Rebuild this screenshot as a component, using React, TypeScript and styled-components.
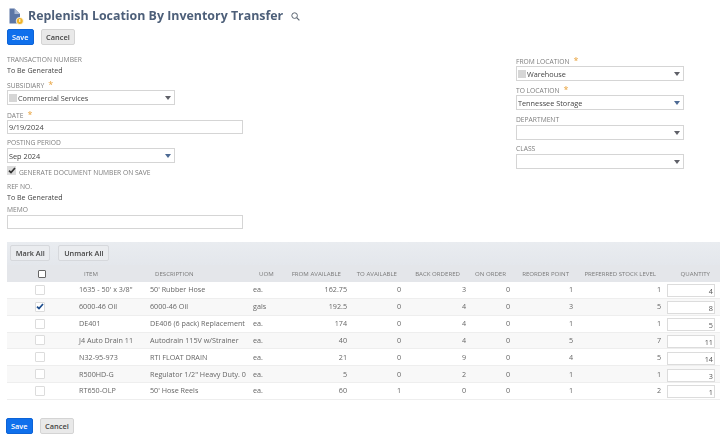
import React from "react";
import styled, { createGlobalStyle } from "styled-components";

const Global = createGlobalStyle`
  html, body { margin: 0; padding: 0; background: #fff; width: 720px; height: 440px; overflow: hidden; }
  * { box-sizing: border-box; }
  body { font-family: "Open Sans", "Liberation Sans", sans-serif; color: #444; }
`;

const Page = styled.div`
  width: 720px;
  height: 440px;
  display: flex;
  flex-direction: column;
  filter: blur(0.35px);
`;
const TitleBar = styled.div`
  height: 29px;
  padding: 8px 0 0 9px;
  display: flex;
  align-items: flex-start;
`;
const Title = styled.h1`
  margin: 0 0 0 4px;
  font-size: 12.4px;
  line-height: 16px;
  font-weight: 700;
  color: #4d5f79;
`;
const SearchWrap = styled.span`
  margin: 4px 0 0 8px;
  display: inline-flex;
`;
const Buttons = styled.div<{ $left?: number }>`
  display: flex;
  gap: 7px;
  padding-left: ${(p) => p.$left ?? 7}px;
`;
const Btn = styled.button<{ $primary?: boolean }>`
  height: 16px;
  padding: 0 ${(p) => (p.$primary ? 4 : 4.5)}px;
  font: 600 7.4px/14px "Open Sans", sans-serif;
  border-radius: 2px;
  border: 1px solid ${(p) => (p.$primary ? "#0d63d6" : "#d4d4d4")};
  background: ${(p) => (p.$primary ? "#0f70ec" : "#e9e9e9")};
  color: ${(p) => (p.$primary ? "#fff" : "#444")};
`;
const Form = styled.div`
  display: flex;
  justify-content: space-between;
  padding: 10px 36px 0 7px;
  height: 197px;
`;
const Column = styled.div<{ $top?: number }>`
  width: 236px;
  display: flex;
  flex-direction: column;
  padding-top: ${(p) => p.$top ?? 0}px;
`;
const RightColumn = styled(Column)`
  width: 168px;
`;
const Field = styled.div<{ $mb?: number }>`
  display: flex;
  flex-direction: column;
  margin-bottom: ${(p) => p.$mb ?? 5}px;
`;
const Label = styled.label`
  font-size: 6.7px;
  line-height: 10px;
  height: 10px;
  color: #7d7d7d;
  white-space: nowrap;
`;
const Star = styled.span`
  color: #e8a23c;
  margin-left: 4px;
  font-size: 9px;
  line-height: 10px;
`;
const Value = styled.div`
  font-size: 7.1px;
  line-height: 11px;
  color: #444;
`;
const Select = styled.div`
  width: 168px;
  height: 15px;
  border: 1px solid #d5d5d5;
  display: flex;
  align-items: center;
  padding: 0 3px 0 1px;
  font-size: 7.3px;
  color: #444;
  background: #fff;
`;
const Swatch = styled.span`
  width: 8px;
  height: 8px;
  background: #d6d6d6;
  margin-right: 1px;
`;
const Caret = styled.span<{ $blue?: boolean }>`
  margin-left: auto;
  width: 0;
  height: 0;
  border-left: 3.5px solid transparent;
  border-right: 3.5px solid transparent;
  border-top: 4px solid ${(p) => (p.$blue ? "#4d6a94" : "#5f6068")};
`;
const Input = styled.div`
  width: 236px;
  height: 14px;
  border: 1px solid #d5d5d5;
  padding-left: 1px;
  font-size: 7.3px;
  line-height: 13px;
  background: #fff;
  color: #444;
`;
const CheckLine = styled.div`
  display: flex;
  align-items: center;
  gap: 3px;
  height: 10px;
  margin: 2px 0 7px;
`;
const CheckBoxGrey = styled.span`
  width: 9px;
  height: 9px;
  background: #dcdcdc;
  display: inline-flex;
  align-items: center;
  justify-content: center;
`;
const CheckLabel = styled(Label)`
  line-height: 12px;
  height: 12px;
  margin-top: 5px;
`;
const Band = styled.div`
  margin-left: 7px;
  height: 23px;
  background: linear-gradient(#e9ecf0, #e4e7ec);
  padding: 3px 0 0 3px;
  display: flex;
  gap: 8px;
  align-items: flex-start;
`;
const BandBtn = styled.button`
  height: 16px;
  padding: 0 4.7px;
  font: 600 7.3px/14px "Open Sans", sans-serif;
  color: #444;
  background: #eaecef;
  border: 1px solid #d6d8dc;
  border-radius: 2px;
`;
const Table = styled.table`
  margin-left: 7px;
  width: 713px;
  table-layout: fixed;
  border-collapse: separate;
  border-spacing: 0;
`;
const Th = styled.th<{ $align?: string; $pl?: number; $pr?: number }>`
  height: 17px;
  padding: 0 ${(p) => p.$pr ?? 0}px 0 ${(p) => p.$pl ?? 0}px;
  background: #e4e6ea;
  font-size: 6.1px;
  font-weight: 400;
  color: #7a7a7a;
  text-align: ${(p) => p.$align ?? "left"};
  white-space: nowrap;
`;
const Tr = styled.tr<{ $alt?: boolean }>`
  background: ${(p) => (p.$alt ? "#f8f8f8" : "#fff")};
`;
const Td = styled.td<{ $num?: boolean; $pr?: number }>`
  height: 16.85px;
  padding: 0 ${(p) => p.$pr ?? 3}px 0 ${(p) => (p.$num ? 0 : 4)}px;
  font-size: 7.2px;
  line-height: 9px;
  color: #666;
  text-align: ${(p) => (p.$num ? "right" : "left")};
  white-space: nowrap;
  overflow: hidden;
  border-bottom: 1px solid #eeeeee;
`;
const CheckCell = styled.td`
  height: 16.85px;
  padding: 0 0 0 28px;
  line-height: 0;
  border-bottom: 1px solid #eeeeee;
`;
const HeaderCheckCell = styled(Th)`
  padding-left: 31px;
  line-height: 0;
`;
const RowCheck = styled.span`
  display: inline-flex;
  width: 10px;
  height: 10px;
  border: 1px solid #dcdcdc;
  border-radius: 1px;
  background: #fff;
  align-items: center;
  justify-content: center;
`;
const HeaderCheck = styled(RowCheck)`
  width: 8px;
  height: 8px;
  border-color: #666;
`;
const Qty = styled.div`
  width: 48px;
  height: 13px;
  margin: 2px 0 0 3px;
  border: 1px solid #dcdcdc;
  font-size: 7.3px;
  line-height: 12px;
  padding-right: 1px;
  text-align: right;
  color: #555;
  background: #fff;
`;
const BottomButtons = styled(Buttons)`
  margin-top: 18px;
  padding-left: 6px;
`;

const Tick = ({ color = "#333" }: { color?: string }) => (
  <svg width="8" height="7" viewBox="0 0 8 7">
    <path d="M1 3.6 L3 5.6 L7 1" fill="none" stroke={color} strokeWidth="1.7" />
  </svg>
);

const Logo = () => (
  <svg width="15" height="17" viewBox="0 0 15 17">
    <path d="M0.5 0.5 H5.5 L11 6 V15.5 H0.5 Z" fill="#5c76a6" />
    <path d="M5.5 0.5 V6 H11 Z" fill="#a9b7d2" />
    <circle cx="10.8" cy="13" r="3.6" fill="#f0b429" stroke="#fff" strokeWidth="0.8" />
    <rect x="10.3" y="11" width="1" height="3" fill="#fff" />
  </svg>
);

const Search = () => (
  <svg width="9" height="9" viewBox="0 0 9 9">
    <circle cx="3.6" cy="3.6" r="2.8" fill="none" stroke="#5a6470" strokeWidth="1" />
    <path d="M5.7 5.7 L8.4 8.4" stroke="#5a6470" strokeWidth="1.2" />
  </svg>
);

const rows = [
  ["1635 - 50' x 3/8\"", "50' Rubber Hose", "ea.", "162.75", "0", "3", "0", "1", "1", "4"],
  ["6000-46 Oil", "6000-46 Oil", "gals", "192.5", "0", "4", "0", "3", "5", "8"],
  ["DE401", "DE406 (6 pack) Replacement", "ea.", "174", "0", "4", "0", "1", "1", "5"],
  ["J4 Auto Drain 11", "Autodrain 115V w/Strainer", "ea.", "40", "0", "4", "0", "5", "7", "11"],
  ["N32-95-973", "RTI FLOAT DRAIN", "ea.", "21", "0", "9", "0", "4", "5", "14"],
  ["R500HD-G", "Regulator 1/2\" Heavy Duty. 0", "ea.", "5", "0", "2", "0", "1", "1", "3"],
  ["RT650-OLP", "50' Hose Reels", "ea.", "60", "1", "0", "0", "1", "2", "1"],
];

const widths = [68, 71, 103, 36, 65, 54, 65, 44, 63, 88, 56];

export default function App() {
  return (
    <Page>
      <Global />
      <TitleBar>
        <Logo />
        <Title>Replenish Location By Inventory Transfer</Title>
        <SearchWrap><Search /></SearchWrap>
      </TitleBar>
      <Buttons>
        <Btn $primary>Save</Btn>
        <Btn>Cancel</Btn>
      </Buttons>
      <Form>
        <Column>
          <Field $mb={4}>
            <Label>TRANSACTION NUMBER</Label>
            <Value>To Be Generated</Value>
          </Field>
          <Field>
            <Label>SUBSIDIARY<Star>*</Star></Label>
            <Select><Swatch />Commercial Services<Caret /></Select>
          </Field>
          <Field $mb={4}>
            <Label>DATE<Star>*</Star></Label>
            <Input>9/19/2024</Input>
          </Field>
          <Field $mb={0}>
            <Label>POSTING PERIOD</Label>
            <Select>Sep 2024<Caret $blue /></Select>
          </Field>
          <CheckLine>
            <CheckBoxGrey><Tick /></CheckBoxGrey>
            <CheckLabel>GENERATE DOCUMENT NUMBER ON SAVE</CheckLabel>
          </CheckLine>
          <Field $mb={2}>
            <Label>REF NO.</Label>
            <Value>To Be Generated</Value>
          </Field>
          <Field>
            <Label>MEMO</Label>
            <Input />
          </Field>
        </Column>
        <RightColumn $top={1}>
          <Field $mb={4}>
            <Label>FROM LOCATION<Star>*</Star></Label>
            <Select><Swatch />Warehouse<Caret /></Select>
          </Field>
          <Field $mb={5}>
            <Label>TO LOCATION<Star>*</Star></Label>
            <Select>Tennessee Storage<Caret $blue /></Select>
          </Field>
          <Field $mb={4}>
            <Label>DEPARTMENT</Label>
            <Select><Caret /></Select>
          </Field>
          <Field>
            <Label>CLASS</Label>
            <Select><Caret /></Select>
          </Field>
        </RightColumn>
      </Form>
      <Band>
        <BandBtn>Mark All</BandBtn>
        <BandBtn>Unmark All</BandBtn>
      </Band>
      <Table>
        <colgroup>
          {widths.map((w, i) => <col key={i} style={{ width: w }} />)}
        </colgroup>
        <thead>
          <tr>
            <HeaderCheckCell><HeaderCheck /></HeaderCheckCell>
            <Th $pl={9}>ITEM</Th>
            <Th $pl={9}>DESCRIPTION</Th>
            <Th $pl={10}>UOM</Th>
            <Th $align="right" $pr={9}>FROM AVAILABLE</Th>
            <Th $align="right" $pr={7}>TO AVAILABLE</Th>
            <Th $align="right" $pr={9}>BACK ORDERED</Th>
            <Th $align="right" $pr={7}>ON ORDER</Th>
            <Th $align="right" $pr={7}>REORDER POINT</Th>
            <Th $align="right" $pr={8}>PREFERRED STOCK LEVEL</Th>
            <Th $align="right" $pr={10}>QUANTITY</Th>
          </tr>
        </thead>
        <tbody>
          {rows.map((r, i) => (
            <Tr key={r[0]} $alt={i % 2 === 1}>
              <CheckCell>
                <RowCheck>{i === 1 && <Tick color="#1c4c8c" />}</RowCheck>
              </CheckCell>
              <Td>{r[0]}</Td>
              <Td>{r[1]}</Td>
              <Td>{r[2]}</Td>
              <Td $num>{r[3]}</Td>
              <Td $num>{r[4]}</Td>
              <Td $num>{r[5]}</Td>
              <Td $num>{r[6]}</Td>
              <Td $num>{r[7]}</Td>
              <Td $num>{r[8]}</Td>
              <Td $num $pr={0}><Qty>{r[9]}</Qty></Td>
            </Tr>
          ))}
        </tbody>
      </Table>
      <BottomButtons>
        <Btn $primary>Save</Btn>
        <Btn>Cancel</Btn>
      </BottomButtons>
    </Page>
  );
}
